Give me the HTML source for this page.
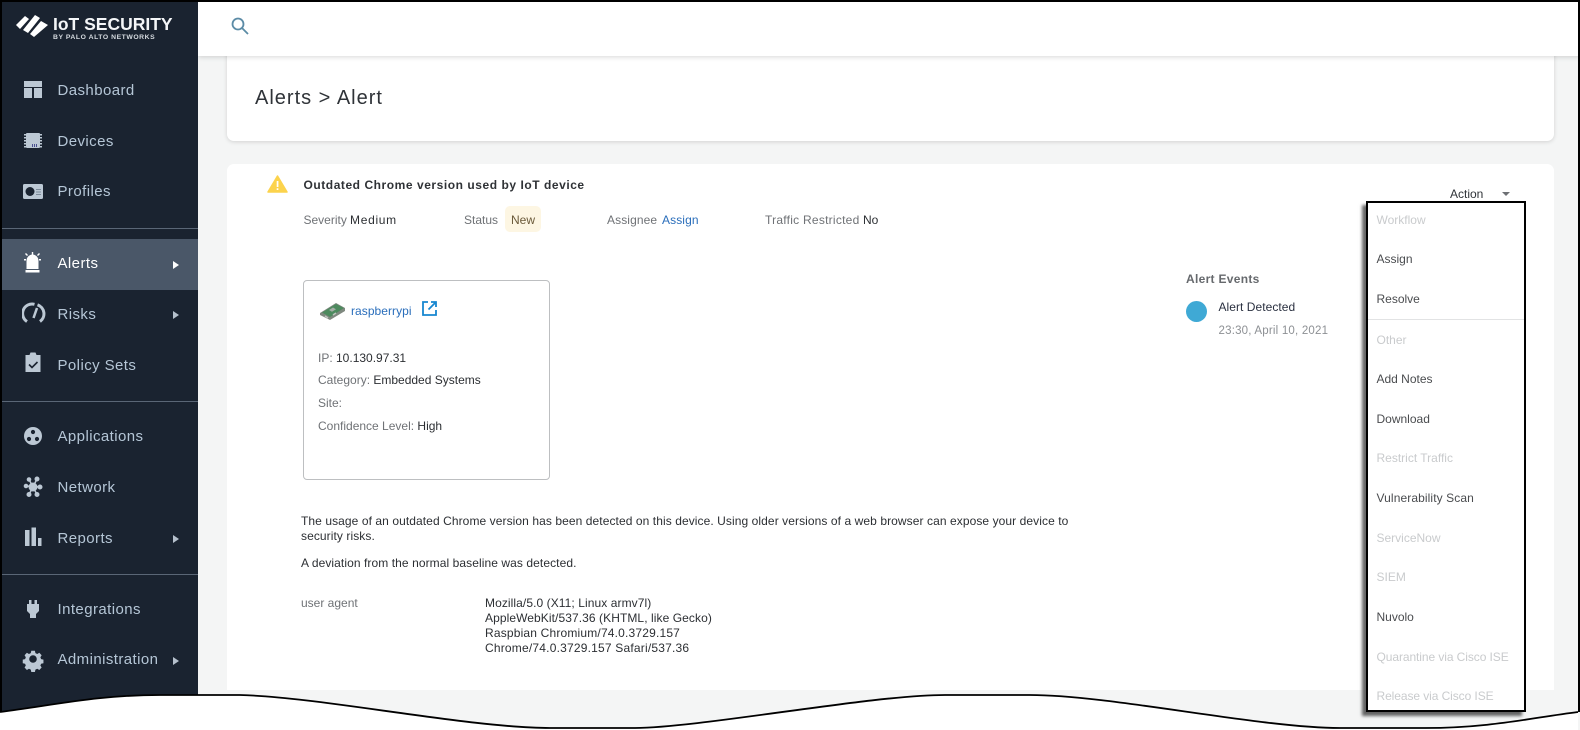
<!DOCTYPE html>
<html><head><meta charset="utf-8"><title>Alerts</title>
<style>
*{box-sizing:border-box}
html,body{margin:0;padding:0}
body{width:1580px;height:730px;overflow:hidden;background:#fff;position:relative;font-family:"Liberation Sans",sans-serif;font-size:12px;color:#2c2f33}
.a{position:absolute;white-space:nowrap;line-height:20px}
#main{position:absolute;left:0;top:0;width:1580px;height:730px;background:#f4f5f5}
#side{position:absolute;left:0;top:0;width:198px;height:730px;background:#1a2330}
#head{position:absolute;left:198px;top:0;width:1382px;height:56px;background:#fff;box-shadow:0 1px 5px rgba(0,0,0,.16)}
.nav{position:absolute;left:57.500px;font-size:15px;letter-spacing:.42px;line-height:20px;color:#b5c6d6;white-space:nowrap}
.ic{position:absolute;left:22px;width:34px;height:34px}
.hr{position:absolute;left:0;width:198px;height:1px;background:#5a6676}
.chev{position:absolute;left:173px;width:0;height:0;border-left:6px solid #b5c0cc;border-top:4px solid transparent;border-bottom:4px solid transparent}
.card{position:absolute;background:#fff;border-radius:7px}
.g{color:#6f7276}
.b{color:#2a6ebb}
.t{letter-spacing:.08px}
#menu{position:absolute;left:1366px;top:201px;width:160px;height:511px;background:#fff;border:2px solid #000;box-shadow:-4px 4px 3px rgba(0,0,0,.6)}
.mi{position:absolute;left:1376.500px;line-height:20px;font-size:12px;color:#4a4c4f;white-space:nowrap}
.off{color:#c9cbcd}
</style></head><body>
<div id="main"></div>

<div class="card" style="left:227px;top:40px;width:1327px;height:101px;box-shadow:0 1px 4px rgba(0,0,0,.14)"></div>
<div class="card" style="left:227px;top:164px;width:1327px;height:526px;border-radius:7px 7px 0 0"></div>
<div id="head"></div>
<div id="side"></div>

<!-- logo -->
<svg class="a" style="left:15px;top:13px" width="34" height="25" viewBox="0 0 34 25" fill="#fff">
<path d="M1 12 L10 3 L14 6 L5 16Z"/><path d="M8 17 L20 2 L25 5 L13 20Z"/><path d="M15 21 L26 8 L33 12 L19 24Z"/>
</svg>
<div class="a" style="left:53px;top:13px;font-size:17.500px;font-weight:700;color:#f4f6f8;letter-spacing:0;line-height:22px">IoT SECURITY</div>
<div class="a" style="left:53px;top:33px;font-size:6.800px;font-weight:700;color:#d6dbe0;letter-spacing:.55px;line-height:10px">BY PALO ALTO NETWORKS</div>

<!-- nav -->
<svg class="ic" style="top:73px" viewBox="0 0 34 34" fill="#bcc8d4"><rect x="2" y="8" width="18" height="6"/><rect x="2" y="15" width="8" height="10"/><rect x="12" y="15" width="8" height="10"/></svg>
<div class="nav" style="top:81px">Dashboard</div>
<svg class="ic" style="top:124px" viewBox="0 0 34 34" fill="#bcc8d4"><rect x="4" y="9" width="14" height="15" rx="1"/><path d="M2 10h2v1.500H2zM2 13h2v1.500H2zM2 16h2v1.500H2zM2 19h2v1.500H2zM2 22h2v1.500H2zM18 10h2v1.500h-2zM18 13h2v1.500h-2zM18 16h2v1.500h-2zM18 19h2v1.500h-2zM18 22h2v1.500h-2z"/><path d="M10 20h1v3h-1zM12 20h1v3h-1zM14 20h1v3h-1z" fill="#4a4f90"/></svg>
<div class="nav" style="top:132px">Devices</div>
<svg class="ic" style="top:174px" viewBox="0 0 34 34"><rect x="1" y="10" width="20" height="15" rx="1.500" fill="#bcc8d4"/><circle cx="8" cy="17.500" r="4.500" fill="#1a2330"/><path d="M14 15h5v1h-5zM14 17.500h5v1h-5zM14 20h5v1h-5z" fill="#7d8b9a"/></svg>
<div class="nav" style="top:182px">Profiles</div>
<div class="hr" style="top:228px"></div>

<div style="position:absolute;left:2px;top:239px;width:196px;height:51px;background:#4a5768"></div>
<svg class="ic" style="top:246px" viewBox="0 0 34 34" fill="#fff"><path d="M4.500 23 V15 a6 6.500 0 0 1 12 0 V23Z"/><rect x="3.500" y="24" width="14" height="2.500"/><path d="M9.800 6h1.400v3H9.800zM2 13h2v1.500H2zM17 13h2v1.500h-2zM3 8l1-1 2 2-1 1zM18 8l-1-1-2 2 1 1z"/></svg>
<div class="nav" style="top:254px;color:#fff">Alerts</div>
<div class="chev" style="top:261px;border-left-color:#fff"></div>
<svg class="ic" style="top:296px" viewBox="0 0 34 34" fill="none" stroke="#bcc8d4" stroke-width="3"><path d="M5 25.500 A 9.500 9.500 0 0 1 12.500 8.300 M15.500 8.800 A 9.500 9.500 0 0 1 18 25.500"/><path d="M15 12 L11.500 22" stroke-width="2.500"/></svg>
<div class="nav" style="top:305px">Risks</div>
<div class="chev" style="top:311px"></div>
<svg class="ic" style="top:347px" viewBox="0 0 34 34"><path d="M3.500 8h4l1-2.500h5l1 2.500h4v17h-15z" fill="#bcc8d4"/><path d="M7 17.500l3 3 5.500-5.500" fill="none" stroke="#1a2330" stroke-width="1.600"/></svg>
<div class="nav" style="top:356px">Policy Sets</div>
<div class="hr" style="top:401px"></div>

<svg class="ic" style="top:419px" viewBox="0 0 34 34"><circle cx="11" cy="17" r="9" fill="#bcc8d4"/><circle cx="11" cy="13" r="2.100" fill="#1a2330"/><circle cx="7" cy="20" r="2.100" fill="#1a2330"/><circle cx="15" cy="20" r="2.100" fill="#1a2330"/></svg>
<div class="nav" style="top:427px">Applications</div>
<svg class="ic" style="top:470px" viewBox="0 0 34 34" fill="#bcc8d4" stroke="#bcc8d4"><circle cx="11" cy="17" r="4"/><circle cx="4" cy="16" r="1.800"/><circle cx="7" cy="9.500" r="1.800"/><circle cx="15" cy="9" r="2"/><circle cx="18" cy="17" r="2"/><circle cx="15" cy="24.500" r="2"/><circle cx="7" cy="24.500" r="2"/><path d="M4 16L18 17M7 9.500L15 24.500M15 9L7 24.500" stroke-width="1.500"/></svg>
<div class="nav" style="top:478px">Network</div>
<svg class="ic" style="top:521px" viewBox="0 0 34 34" fill="#bcc8d4"><rect x="3" y="9" width="4.500" height="16"/><rect x="9.500" y="6.500" width="4.500" height="18.500"/><rect x="16" y="17" width="3.500" height="8"/></svg>
<div class="nav" style="top:529px">Reports</div>
<div class="chev" style="top:535px"></div>
<div class="hr" style="top:574px"></div>
<svg class="ic" style="top:592px" viewBox="0 0 34 34" fill="#bcc8d4"><path d="M7 8h2.500v4h3V8H15v4h2v7l-3 3v4h-6v-4l-3-3v-7h2z"/></svg>
<div class="nav" style="top:600px">Integrations</div>
<svg class="ic" style="top:642px" viewBox="0 0 34 34" fill="#bcc8d4"><path d="M9 8h4l.6 2.600 2 .9 2.300-1.300 2.600 2.800-1.400 2.200.8 2 2.600.6v4l-2.600.6-.8 2-0 0 1.400 2.200-2.600 2.800-2.300-1.400-2 .9-.6 2.600h-4l-.6-2.600-2-.9-2.300 1.400-2.600-2.800 1.400-2.200-.8-2-2.600-.6v-4l2.600-.6.800-2-1.400-2.200 2.600-2.800 2.300 1.300 2-.9z" transform="translate(1.200 1.600) scale(.9)"/><circle cx="11" cy="17" r="3.800" fill="#1a2330"/></svg>
<div class="nav" style="top:650px">Administration</div>
<div class="chev" style="top:657px"></div>

<!-- search -->
<svg class="a" style="left:230px;top:16px" width="20" height="20" viewBox="0 0 20 20" fill="none" stroke="#5b8ba6" stroke-width="1.800"><circle cx="8" cy="8" r="5.500"/><path d="M12 12l6 6"/></svg>

<div class="a" style="left:255px;top:88px;font-size:20px;color:#2f3338;letter-spacing:1px">Alerts &gt; Alert</div>

<!-- alert head -->
<svg class="a" style="left:267px;top:175px" width="21" height="18" viewBox="0 0 21 18"><path d="M10.500 1 L20 17 H1Z" fill="#fcd34d" stroke="#fcd34d" stroke-linejoin="round" stroke-width="1.500"/><path d="M9.700 6h1.700v6H9.700zM9.700 13.300h1.700V15H9.700z" fill="#fff"/></svg>
<div class="a" style="left:303.500px;top:175px;font-weight:700;letter-spacing:.55px;color:#2f3236">Outdated Chrome version used by IoT device</div>

<div class="a g" style="left:303.500px;top:210px">Severity</div>
<div class="a" style="left:350px;top:210px;letter-spacing:.7px">Medium</div>
<div class="a g" style="left:464px;top:210px">Status</div>
<div style="position:absolute;left:505px;top:206px;width:36px;height:26px;background:#fdf6e3;border-radius:5px"></div>
<div class="a" style="left:511px;top:210px;color:#6b5a3a">New</div>
<div class="a g" style="left:607px;top:210px;letter-spacing:.1px">Assignee</div>
<div class="a b" style="left:662px;top:210px;letter-spacing:.1px">Assign</div>
<div class="a g" style="left:765px;top:210px;letter-spacing:.25px">Traffic Restricted</div>
<div class="a" style="left:863px;top:210px">No</div>

<!-- device box -->
<div style="position:absolute;left:303px;top:280px;width:247px;height:200px;border:1px solid #bdbfc1;border-radius:4px"></div>
<svg class="a" style="left:319px;top:301px" width="27" height="21" viewBox="0 0 27 21"><path d="M1 12 L17 2 L26 7 L26 10 L11 19 L1 14Z" fill="#7f887f"/><path d="M3 11.500 L17 3 L25 7 L11 16Z" fill="#4d8a5e"/><path d="M10 9l4-2.500 3 1.800-4 2.500z" fill="#a6ada7"/><path d="M6 15l3 2M14 14l3-2" stroke="#bfc4bf" stroke-width="1.500"/></svg>
<div class="a b" style="left:351px;top:301px;letter-spacing:.05px">raspberrypi</div>
<svg class="a" style="left:421px;top:300px" width="17" height="17" viewBox="0 0 17 17" fill="none" stroke="#1787d0" stroke-width="1.800"><path d="M7 2H2v13h13v-5"/><path d="M10 2h5v5M15 2L7.500 9.500"/></svg>
<div class="a" style="left:318px;top:348px"><span class="g">IP:</span> 10.130.97.31</div>
<div class="a" style="left:318px;top:370px"><span class="g">Category:</span> Embedded Systems</div>
<div class="a g" style="left:318px;top:393px">Site:</div>
<div class="a" style="left:318px;top:416px"><span class="g">Confidence Level:</span> High</div>

<div class="a t" style="left:301px;top:511px">The usage of an outdated Chrome version has been detected on this device. Using older versions of a web browser can expose your device to</div>
<div class="a t" style="left:301px;top:526px">security risks.</div>
<div class="a t" style="left:301px;top:553px">A deviation from the normal baseline was detected.</div>
<div class="a g" style="left:301px;top:593px">user agent</div>
<div class="a t" style="left:485px;top:593px">Mozilla/5.0 (X11; Linux armv7l)</div>
<div class="a t" style="left:485px;top:608px">AppleWebKit/537.36 (KHTML, like Gecko)</div>
<div class="a" style="left:485px;top:623px;letter-spacing:.18px">Raspbian Chromium/74.0.3729.157</div>
<div class="a" style="left:485px;top:638px;letter-spacing:.2px">Chrome/74.0.3729.157 Safari/537.36</div>

<!-- events -->
<div class="a" style="left:1186px;top:269px;font-weight:700;color:#66696d;letter-spacing:.3px">Alert Events</div>
<div style="position:absolute;left:1186px;top:301px;width:21px;height:21px;border-radius:50%;background:#3fa9d5"></div>
<div class="a" style="left:1218.500px;top:297px;color:#2a3040;letter-spacing:.05px">Alert Detected</div>
<div class="a" style="left:1218.500px;top:320.500px;font-size:11.500px;color:#8d9094;letter-spacing:.2px">23:30, April 10, 2021</div>

<!-- wave -->
<svg style="position:absolute;left:0;top:0" width="1580" height="730" viewBox="0 0 1580 730"><path d="M0 712 C60 704 100 695 160 695 L240 695 C320 697 470 728 550 728 L633 728 C700 728 870 695 945 695 L1030 695 C1110 695 1260 728 1340 728 L1425 728 C1490 728 1530 718 1578 712 V732 H-2 V712Z" fill="#fff"/><path d="M0 712 C60 704 100 695 160 695 L240 695 C320 697 470 728 550 728 L633 728 C700 728 870 695 945 695 L1030 695 C1110 695 1260 728 1340 728 L1425 728 C1490 728 1530 718 1578 712" fill="none" stroke="#000" stroke-width="1.800"/><path d="M1 712V1H1579V712" fill="none" stroke="#000" stroke-width="2"/></svg>

<!-- action -->
<div class="a" style="left:1450px;top:183.500px;color:#2f3338">Action</div>
<div style="position:absolute;left:1502px;top:192px;width:0;height:0;border-top:4px solid #6d7074;border-left:4px solid transparent;border-right:4px solid transparent"></div>

<div id="menu"></div>
<div style="position:absolute;left:1368px;top:319px;width:156px;height:1px;background:#e2e3e4"></div>
<div class="mi off" style="top:210px">Workflow</div>
<div class="mi" style="top:249px">Assign</div>
<div class="mi" style="top:289px">Resolve</div>
<div class="mi off" style="top:330px">Other</div>
<div class="mi" style="top:369px">Add Notes</div>
<div class="mi" style="top:409px">Download</div>
<div class="mi off" style="top:448px">Restrict Traffic</div>
<div class="mi" style="top:488px;letter-spacing:.1px">Vulnerability Scan</div>
<div class="mi off" style="top:528px">ServiceNow</div>
<div class="mi off" style="top:567px">SIEM</div>
<div class="mi" style="top:607px">Nuvolo</div>
<div class="mi off" style="top:647px;letter-spacing:-.08px">Quarantine via Cisco ISE</div>
<div class="mi off" style="top:686px;letter-spacing:-.08px">Release via Cisco ISE</div>
</body></html>
